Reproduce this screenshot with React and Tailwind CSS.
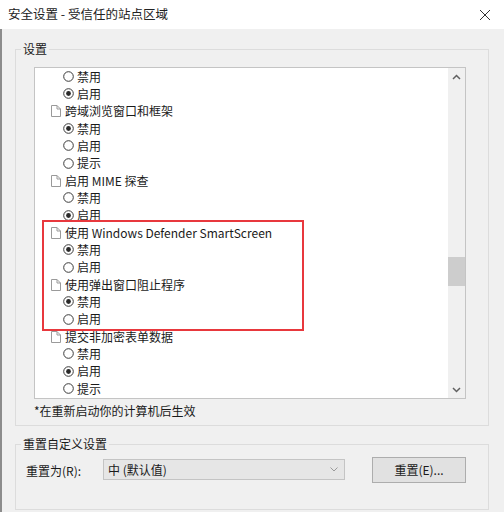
import React from "react";

const FONT = { fontFamily: '"Noto Sans CJK SC", "Noto Sans", sans-serif' };

function Doc() {
  return (
    <svg width="10" height="12" viewBox="0 0 10 12" className="shrink-0">
      <path d="M0.5 0.5H6L9.5 4V11.5H0.5Z" fill="#fff" stroke="#9a9a9a" />
      <path d="M6 0.5V4H9.5" fill="none" stroke="#9a9a9a" />
    </svg>
  );
}

function Radio({ on }) {
  return (
    <svg width="11" height="11" viewBox="0 0 11 11" className="shrink-0">
      <circle cx="5.5" cy="5.5" r="4.8" fill="#fff" stroke="#3a3a3a" strokeWidth="1" />
      {on && <circle cx="5.5" cy="5.5" r="2.4" fill="#2a2a2a" />}
    </svg>
  );
}

const rows = [
  ["r", "禁用", false],
  ["r", "启用", true],
  ["c", "跨域浏览窗口和框架"],
  ["r", "禁用", true],
  ["r", "启用", false],
  ["r", "提示", false],
  ["c", "启用 MIME 探查"],
  ["r", "禁用", false],
  ["r", "启用", true],
  ["c", "使用 Windows Defender SmartScreen"],
  ["r", "禁用", true],
  ["r", "启用", false],
  ["c", "使用弹出窗口阻止程序"],
  ["r", "禁用", true],
  ["r", "启用", false],
  ["c", "提交非加密表单数据"],
  ["r", "禁用", false],
  ["r", "启用", true],
  ["r", "提示", false],
];

export default function App() {
  return (
    <div
      className="relative w-[504px] h-[512px] overflow-hidden bg-[#f0f0f0] text-[12px] text-[#1a1a1a]"
      style={FONT}
    >
      {/* title bar */}
      <div className="h-[29px] bg-white flex items-center justify-between pl-[8px] pr-[13px]">
        <span className="text-[12.5px] text-[#222]">安全设置 - 受信任的站点区域</span>
        <svg width="12" height="12" viewBox="0 0 12 12">
          <path d="M1 1L11 11M11 1L1 11" stroke="#333" strokeWidth="1" />
        </svg>
      </div>

      {/* body */}
      <div className="border-l-2 border-[#8c8c8c] h-[483px] pl-[13px] pr-[15px] pt-[20px] flex flex-col">
        {/* group 1 */}
        <div className="relative h-[377px] border border-[#dcdcdc] pl-[18px] pr-[22px] pt-[17px]">
          <span className="absolute -top-[9px] left-[5px] px-[2px] bg-[#f0f0f0] leading-[16px]">设置</span>
          <div className="relative h-[332px] border border-[#c4c4c4] bg-white flex">
            <div className="flex-1 overflow-hidden">
              {rows.map((r, i) =>
                r[0] === "c" ? (
                  <div key={i} className="h-[17.33px] flex items-center pl-[16px] gap-[4px] leading-none whitespace-nowrap">
                    <Doc />
                    <span>{r[1]}</span>
                  </div>
                ) : (
                  <div key={i} className="h-[17.33px] flex items-center pl-[28px] gap-[3px] leading-none">
                    <Radio on={r[2]} />
                    <span>{r[1]}</span>
                  </div>
                )
              )}
            </div>
            <div className="w-[17px] bg-[#f0f0f0] flex flex-col">
              <div className="h-[17px] flex items-center justify-center">
                <svg width="9" height="6" viewBox="0 0 9 6">
                  <path d="M1 5L4.5 1.5L8 5" fill="none" stroke="#606060" strokeWidth="1.5" />
                </svg>
              </div>
              <div className="flex-1 pt-[172px]">
                <div className="h-[29px] bg-[#cdcdcd]" />
              </div>
              <div className="h-[17px] flex items-center justify-center">
                <svg width="9" height="6" viewBox="0 0 9 6">
                  <path d="M1 1L4.5 4.5L8 1" fill="none" stroke="#606060" strokeWidth="1.5" />
                </svg>
              </div>
            </div>
          </div>
          <div className="mt-[4px] leading-[16px]">*在重新启动你的计算机后生效</div>
        </div>

        {/* group 2 */}
        <div className="relative mt-[18px] h-[66px] border border-[#dcdcdc] pl-[10px] pr-[22px] pt-[14px] flex items-start">
          <span className="absolute -top-[9px] left-[5px] px-[2px] bg-[#f0f0f0] leading-[16px]">重置自定义设置</span>
          <span className="w-[77px] mt-[4px] leading-[16px]">重置为(R):</span>
          <div className="w-[242px] h-[21px] border border-[#c4c4c4] bg-[#e6e6e6] flex items-center justify-between pl-[4px] pr-[6px]">
            <span>中 (默认值)</span>
            <svg width="8" height="5" viewBox="0 0 8 5">
              <path d="M0.5 0.5L4 4L7.5 0.5" fill="none" stroke="#9a9a9a" strokeWidth="1" />
            </svg>
          </div>
          <button className="ml-[27px] -mt-[2px] w-[94px] h-[26px] border border-[#adadad] bg-[#e1e1e1] flex items-center justify-center">
            重置(E)...
          </button>
        </div>
      </div>

      {/* highlight */}
      <div className="absolute left-[42px] top-[220px] w-[262px] h-[111px] border-2 border-[#e8383d]" />
    </div>
  );
}
